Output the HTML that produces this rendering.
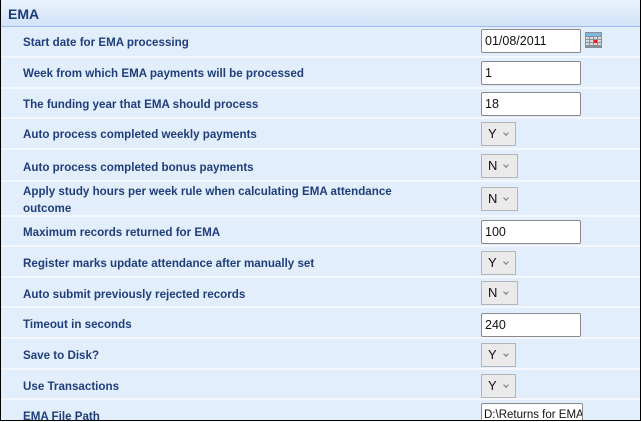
<!DOCTYPE html>
<html><head><style>
body{margin:0;width:641px;height:422px;overflow:hidden;background:#fff;font-family:"Liberation Sans",sans-serif}
#f{position:absolute;left:0;top:0;width:639px;height:420px;border:1px solid #000;border-top:none;background:#e3eefc;overflow:hidden}
#h{position:absolute;left:0;top:0;width:639px;height:27px;background:linear-gradient(#eaf2fd,#d3e3f9);border-bottom:1px solid #9dbbe6;color:#1a3c78;font-weight:bold;font-size:14px;line-height:28px;padding-left:7px;box-sizing:border-box}
.r{position:absolute;left:0;width:639px;border-bottom:2px solid #f4f8fe;box-sizing:border-box}
.l{position:absolute;left:22px;color:#1f3e7a;font-size:11.6px;font-weight:bold;line-height:17px;width:380px}
.t{position:absolute;left:480px;width:100px;height:24px;box-sizing:border-box;background:#fff;border:1px solid #8a8a8a;border-radius:2px;font-size:12.5px;line-height:22px;padding-left:3px;color:#111}
.s{position:absolute;left:480px;width:35px;height:24px;box-sizing:border-box;background:#eaeaea;border:1px solid #b5b5b5;font-size:13px;line-height:22px;padding-left:6px;color:#111}
.s i{position:absolute;left:22px;top:8px;width:3px;height:3px;border-right:1px solid #777;border-bottom:1px solid #777;transform:rotate(45deg)}
</style></head><body>
<div id="f">
<div id="h">EMA</div>
<div class="r" style="top:27px;height:31px"><div class="l" style="top:7px">Start date for EMA processing</div><div class="t" style="top:2px">01/08/2011</div>
<svg style="position:absolute;left:584px;top:5px" width="17" height="16"><rect x="0" y="0" width="17" height="16" fill="#8a9098"/><rect x="1" y="1" width="15" height="3" fill="#7fb6e0"/><g fill="#d8dcdf"><rect x="1" y="5" width="3" height="2"/><rect x="5" y="5" width="3" height="2"/><rect x="9" y="5" width="3" height="2"/><rect x="13" y="5" width="3" height="2"/><rect x="1" y="8" width="3" height="2"/><rect x="5" y="8" width="3" height="2"/><rect x="13" y="8" width="3" height="2"/><rect x="1" y="11" width="3" height="2"/><rect x="5" y="11" width="3" height="2"/><rect x="9" y="11" width="3" height="2"/><rect x="13" y="11" width="3" height="2"/></g><rect x="9" y="8" width="3" height="3" fill="#e02020"/></svg></div>
<div class="r" style="top:58px;height:31px"><div class="l" style="top:7px">Week from which EMA payments will be processed</div><div class="t" style="top:3px">1</div></div>
<div class="r" style="top:89px;height:30px"><div class="l" style="top:7px">The funding year that EMA should process</div><div class="t" style="top:3px">18</div></div>
<div class="r" style="top:119px;height:31px"><div class="l" style="top:7px">Auto process completed weekly payments</div><div class="s" style="top:3px">Y<i></i></div></div>
<div class="r" style="top:150px;height:32px"><div class="l" style="top:9px">Auto process completed bonus payments</div><div class="s" style="top:4px;width:37px">N<i></i></div></div>
<div class="r" style="top:182px;height:35px"><div class="l" style="top:1px">Apply study hours per week rule when calculating EMA attendance outcome</div><div class="s" style="top:5px;width:37px">N<i></i></div></div>
<div class="r" style="top:217px;height:30px"><div class="l" style="top:7px">Maximum records returned for EMA</div><div class="t" style="top:3px">100</div></div>
<div class="r" style="top:247px;height:31px"><div class="l" style="top:8px">Register marks update attendance after manually set</div><div class="s" style="top:4px">Y<i></i></div></div>
<div class="r" style="top:278px;height:30px"><div class="l" style="top:8px">Auto submit previously rejected records</div><div class="s" style="top:3px;width:37px">N<i></i></div></div>
<div class="r" style="top:308px;height:31px"><div class="l" style="top:8px">Timeout in seconds</div><div class="t" style="top:5px">240</div></div>
<div class="r" style="top:339px;height:31px"><div class="l" style="top:8px">Save to Disk?</div><div class="s" style="top:4px">Y<i></i></div></div>
<div class="r" style="top:370px;height:30px"><div class="l" style="top:8px">Use Transactions</div><div class="s" style="top:4px">Y<i></i></div></div>
<div class="r" style="top:400px;height:30px;border:none"><div class="l" style="top:8px">EMA File Path</div><div class="t" style="top:3px;width:102px;white-space:nowrap;overflow:hidden;font-size:11.5px;padding-left:2px">D:\Returns for EMA\</div></div>
</div>
</body></html>
